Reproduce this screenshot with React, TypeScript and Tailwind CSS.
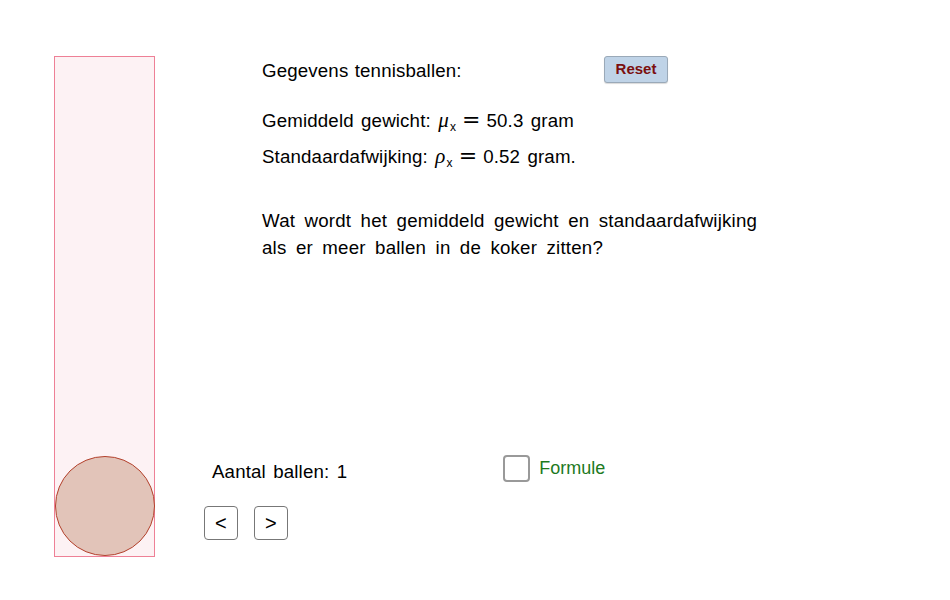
import { useState } from "react";

function MathVar({ sym }: { sym: string }) {
  return (
    <span className="whitespace-nowrap leading-none">
      <span className="italic font-['Liberation_Serif',serif] text-[21px] leading-none">{sym}</span>
      <span className="text-[12px] leading-none relative top-[4px] ml-[1px]">x</span>
      <span className="inline-block font-['DejaVu_Sans',sans-serif] text-[22px] leading-none mx-[6px] tracking-normal">=</span>
    </span>
  );
}

export default function App() {
  const [count, setCount] = useState(1);
  const [formule, setFormule] = useState(false);

  return (
    <div className="w-[950px] h-[600px] bg-white font-['Liberation_Sans',sans-serif] text-[18.7px] tracking-[0.15px] [word-spacing:1px] text-black flex pt-[56px] pl-[54px]">
      {/* koker */}
      <div className="w-[101px] h-[501px] bg-[#fdf2f4] border border-[#ee8096] flex flex-col justify-end items-center">
        <div className="w-[100px] h-[100px] rounded-full bg-[#e2c4b9] border border-[#b3412c]" />
      </div>

      <div className="flex flex-col justify-between h-[500px]">
        {/* bovenkant */}
        <div className="pl-[107px]">
          <div className="flex items-center h-[27px]">
            <span className="mt-[4px] w-[342px]">Gegevens tennisballen:</span>
            <button className="w-[64px] h-[27px] rounded-[3px] bg-[#bfd3e7] border border-[#9aa9b8] text-[#7b0f0f] font-bold text-[15px] tracking-normal font-['Liberation_Sans',sans-serif] shadow-[0_1px_1px_rgba(0,0,0,0.15)]">
              Reset
            </button>
          </div>
          <p className="mt-[20px] h-[36px] leading-[36px] [word-spacing:2px]">
            Gemiddeld gewicht: <MathVar sym="μ" />50.3 gram
          </p>
          <p className="h-[36px] leading-[36px] [word-spacing:2px]">
            Standaardafwijking: <MathVar sym="ρ" />0.52 gram.
          </p>
          <p className="mt-[32px] leading-[27px] w-[505px] tracking-[0.2px] [word-spacing:4px]">
            Wat wordt het gemiddeld gewicht en standaardafwijking als er meer ballen in de koker zitten?
          </p>
        </div>

        {/* onderkant */}
        <div className="flex pl-[49px] pb-[16px]">
          <div className="flex flex-col">
            <span className="pl-[8px] leading-[24px] [word-spacing:2px]">Aantal ballen: {count}</span>
            <div className="flex gap-[16px] mt-[22px]">
              <button
                onClick={() => setCount(Math.max(1, count - 1))}
                className="w-[34px] h-[34px] rounded-[4px] border border-[#777] bg-white text-[20px] leading-none"
              >
                &lt;
              </button>
              <button
                onClick={() => setCount(count + 1)}
                className="w-[34px] h-[34px] rounded-[4px] border border-[#777] bg-white text-[20px] leading-none"
              >
                &gt;
              </button>
            </div>
          </div>
          <label className="flex items-center gap-[9px] ml-[156px] self-start mt-[-5px] cursor-pointer">
            <span
              onClick={() => setFormule(!formule)}
              className="w-[27px] h-[27px] rounded-[4px] border-2 border-[#999] bg-white"
            />
            <span className="text-[#1e7a1e] text-[18px] tracking-normal">Formule</span>
          </label>
        </div>
      </div>
    </div>
  );
}
